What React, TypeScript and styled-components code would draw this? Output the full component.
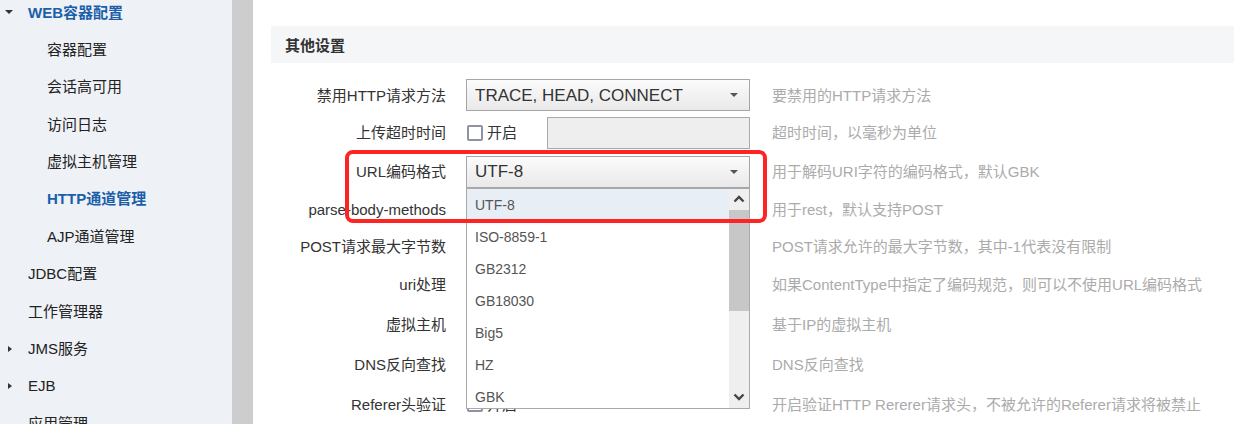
import React from "react";
import styled, { createGlobalStyle } from "styled-components";

const GlobalStyle = createGlobalStyle`
  html, body { margin: 0; padding: 0; background: #fff; }
  body {
    font-family: "Liberation Sans", "Noto Sans CJK SC", sans-serif;
    overflow: hidden;
  }
  * { box-sizing: border-box; }
`;

const Page = styled.div`
  display: flex;
  width: 1234px;
  height: 424px;
  overflow: hidden;
`;

const Sidebar = styled.nav`
  width: 232px;
  flex: none;
  background: #eef1f6;
  overflow: hidden;
`;

const SideGutter = styled.div`
  width: 21px;
  flex: none;
  background: #cdcdcd;
`;

const NavList = styled.ul`
  list-style: none;
  margin: -6.7px 0 0 0;
  padding: 0;
  display: flex;
  flex-direction: column;
`;

const NavItem = styled.li<{ $level: number; $active?: boolean }>`
  height: 37.4px;
  display: flex;
  align-items: center;
  padding-left: ${(p) => (p.$level === 1 ? 47 : 0)}px;
  font-size: 15px;
  line-height: 1;
  color: ${(p) => (p.$active ? "#1b5ea9" : "#222")};
  font-weight: ${(p) => (p.$active ? 700 : 400)};
  white-space: nowrap;
`;

const CaretSlot = styled.span`
  width: 28px;
  flex: none;
  display: flex;
  align-items: center;
`;

const Caret = styled.span<{ $open?: boolean }>`
  width: 0;
  height: 0;
  ${(p) =>
    p.$open
      ? `margin-left: 5px;
         border-left: 4px solid transparent;
         border-right: 4px solid transparent;
         border-top: 4px solid #333;`
      : `margin-left: 8px;
         border-top: 3.5px solid transparent;
         border-bottom: 3.5px solid transparent;
         border-left: 4px solid #333;`}
`;

const Content = styled.main`
  flex: 1;
  position: relative;
  padding: 26px 0 0 18px;
  color: #333;
`;

const SectionTitle = styled.h3`
  margin: 0 0 14px 0;
  height: 37px;
  display: flex;
  align-items: center;
  padding-left: 14px;
  background: #f5f6f8;
  font-size: 15px;
  font-weight: 700;
  color: #333;
`;

const FormRow = styled.div<{ $h: number }>`
  display: grid;
  grid-template-columns: 175px 284px 1fr;
  column-gap: 20px;
  align-items: center;
  height: ${(p) => p.$h}px;
`;

const Label = styled.label`
  text-align: right;
  font-size: 15px;
  line-height: 1;
  color: #333;
  white-space: nowrap;
`;

const Hint = styled.span`
  padding-left: 2px;
  font-size: 15px;
  line-height: 1;
  color: #ababab;
  white-space: nowrap;
`;

const Control = styled.div`
  position: relative;
  display: flex;
  align-items: center;
  height: 32px;
`;

const SelectBox = styled.div`
  width: 284px;
  height: 32px;
  border: 1px solid #a6a6a6;
  background: linear-gradient(#fbfbfb, #e9e9e9);
  display: flex;
  align-items: center;
  justify-content: space-between;
  padding: 0 11px 0 8px;
  font-size: 17px;
  line-height: 1;
  color: #333;
`;

const SelectArrow = styled.span`
  width: 0;
  height: 0;
  border-left: 4px solid transparent;
  border-right: 4px solid transparent;
  border-top: 4px solid #555;
`;

const CheckBox = styled.span`
  width: 16px;
  height: 16px;
  flex: none;
  margin-left: 1px;
  border: 2px solid #8e92a3;
  border-radius: 2px;
  background: #fff;
`;

const CheckText = styled.span`
  margin-left: 4px;
  font-size: 15px;
  line-height: 1;
  color: #333;
`;

const TextInput = styled.div`
  margin-left: auto;
  width: 203px;
  height: 32px;
  border: 1px solid #aaa;
  background: #eeeeee;
`;

const Dropdown = styled.div`
  position: absolute;
  top: 32px;
  left: 0;
  width: 284px;
  height: 221px;
  border: 1px solid #aaa;
  background: #fff;
  display: flex;
  z-index: 2;
`;

const OptionList = styled.ul`
  list-style: none;
  margin: 0;
  padding: 0;
  flex: 1;
  overflow: hidden;
`;

const Option = styled.li<{ $active?: boolean }>`
  height: 32px;
  display: flex;
  align-items: center;
  padding-left: 8px;
  font-size: 14px;
  line-height: 1;
  color: #555;
  background: ${(p) => (p.$active ? "#e8eef5" : "#fff")};
`;

const ScrollBar = styled.div`
  width: 20px;
  flex: none;
  background: #efefef;
  display: flex;
  flex-direction: column;
`;

const ScrollButton = styled.div`
  height: 21px;
  flex: none;
  display: flex;
  align-items: center;
  justify-content: center;
`;

const ScrollThumb = styled.div`
  height: 101px;
  flex: none;
  background: #c7c7c7;
`;

const ScrollTrack = styled.div`
  flex: 1;
`;

const Annotation = styled.div`
  position: absolute;
  left: 92px;
  top: 150px;
  width: 422px;
  height: 73px;
  border: 4px solid #ff2424;
  border-radius: 8px;
  pointer-events: none;
  z-index: 3;
`;

const Chevron = ({ up }: { up?: boolean }) => (
  <svg width="12" height="8" viewBox="0 0 12 8">
    <path
      d={up ? "M1.5 6.5 L6 2 L10.5 6.5" : "M1.5 1.5 L6 6 L10.5 1.5"}
      fill="none"
      stroke="#444"
      strokeWidth="2.4"
    />
  </svg>
);

const navItems: { text: string; level: number; active?: boolean; caret?: "open" | "closed" }[] = [
  { text: "WEB容器配置", level: 0, active: true, caret: "open" },
  { text: "容器配置", level: 1 },
  { text: "会话高可用", level: 1 },
  { text: "访问日志", level: 1 },
  { text: "虚拟主机管理", level: 1 },
  { text: "HTTP通道管理", level: 1, active: true },
  { text: "AJP通道管理", level: 1 },
  { text: "JDBC配置", level: 0 },
  { text: "工作管理器", level: 0 },
  { text: "JMS服务", level: 0, caret: "closed" },
  { text: "EJB", level: 0, caret: "closed" },
  { text: "应用管理", level: 0 },
];

const encodings = ["UTF-8", "ISO-8859-1", "GB2312", "GB18030", "Big5", "HZ", "GBK"];

export default function App() {
  return (
    <>
      <GlobalStyle />
      <Page>
        <Sidebar>
          <NavList>
            {navItems.map((item) => (
              <NavItem key={item.text} $level={item.level} $active={item.active}>
                {item.level === 0 && (
                  <CaretSlot>{item.caret && <Caret $open={item.caret === "open"} />}</CaretSlot>
                )}
                {item.text}
              </NavItem>
            ))}
          </NavList>
        </Sidebar>
        <SideGutter />
        <Content>
          <SectionTitle>其他设置</SectionTitle>

          <FormRow $h={36}>
            <Label>禁用HTTP请求方法</Label>
            <Control>
              <SelectBox>
                <span>TRACE, HEAD, CONNECT</span>
                <SelectArrow />
              </SelectBox>
            </Control>
            <Hint>要禁用的HTTP请求方法</Hint>
          </FormRow>

          <FormRow $h={39}>
            <Label>上传超时时间</Label>
            <Control>
              <CheckBox />
              <CheckText>开启</CheckText>
              <TextInput />
            </Control>
            <Hint>超时时间，以毫秒为单位</Hint>
          </FormRow>

          <FormRow $h={39}>
            <Label>URL编码格式</Label>
            <Control>
              <SelectBox>
                <span>UTF-8</span>
                <SelectArrow />
              </SelectBox>
              <Dropdown>
                <OptionList>
                  {encodings.map((e, i) => (
                    <Option key={e} $active={i === 0}>
                      {e}
                    </Option>
                  ))}
                </OptionList>
                <ScrollBar>
                  <ScrollButton>
                    <Chevron up />
                  </ScrollButton>
                  <ScrollThumb />
                  <ScrollTrack />
                  <ScrollButton>
                    <Chevron />
                  </ScrollButton>
                </ScrollBar>
              </Dropdown>
            </Control>
            <Hint>用于解码URI字符的编码格式，默认GBK</Hint>
          </FormRow>

          <FormRow $h={37}>
            <Label>parse-body-methods</Label>
            <Control />
            <Hint>用于rest，默认支持POST</Hint>
          </FormRow>

          <FormRow $h={37}>
            <Label>POST请求最大字节数</Label>
            <Control />
            <Hint>POST请求允许的最大字节数，其中-1代表没有限制</Hint>
          </FormRow>

          <FormRow $h={39}>
            <Label>uri处理</Label>
            <Control />
            <Hint>如果ContentType中指定了编码规范，则可以不使用URL编码格式</Hint>
          </FormRow>

          <FormRow $h={40}>
            <Label>虚拟主机</Label>
            <Control />
            <Hint>基于IP的虚拟主机</Hint>
          </FormRow>

          <FormRow $h={40}>
            <Label>DNS反向查找</Label>
            <Control />
            <Hint>DNS反向查找</Hint>
          </FormRow>

          <FormRow $h={40}>
            <Label>Referer头验证</Label>
            <Control>
              <CheckBox />
              <CheckText>开启</CheckText>
            </Control>
            <Hint>开启验证HTTP Rererer请求头，不被允许的Referer请求将被禁止</Hint>
          </FormRow>

          <Annotation />
        </Content>
      </Page>
    </>
  );
}
